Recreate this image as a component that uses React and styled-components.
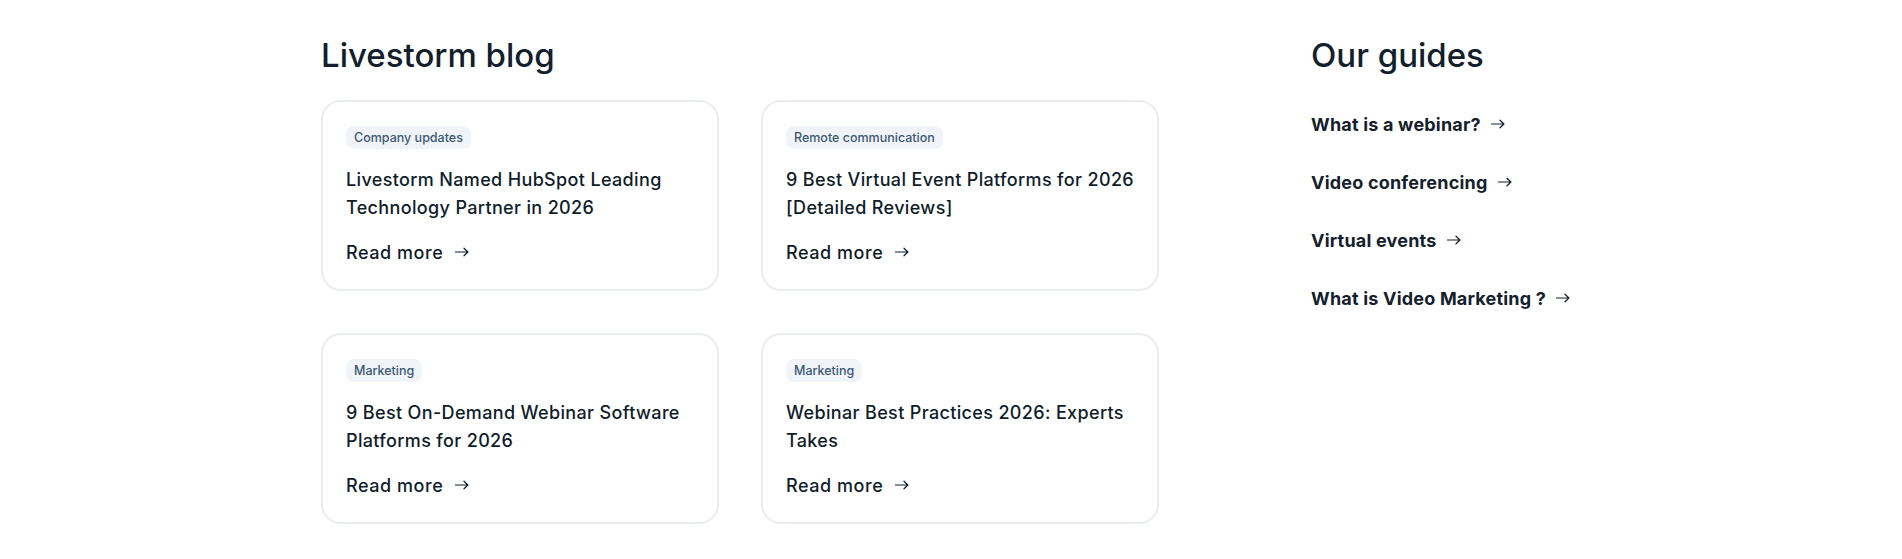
import React from "react";
import styled, { createGlobalStyle } from "styled-components";

const posts = [
  { tag: "Company updates", title: "Livestorm Named HubSpot Leading Technology Partner in 2026" },
  { tag: "Remote communication", title: "9 Best Virtual Event Platforms for 2026 [Detailed Reviews]" },
  { tag: "Marketing", title: "9 Best On-Demand Webinar Software Platforms for 2026" },
  { tag: "Marketing", title: "Webinar Best Practices 2026: Experts Takes" },
];

const guides = [
  "What is a webinar?",
  "Video conferencing",
  "Virtual events",
  "What is Video Marketing ?",
];

const Arrow = () => (
  <svg width="14" height="10" viewBox="0 0 14 10" fill="none">
    <path d="M0.5 5h12.5M9 1.2l3.9 3.8L9 8.8" stroke="currentColor" strokeWidth="1.2" strokeLinecap="round" strokeLinejoin="round" />
  </svg>
);

const App = () => {
  return (
    <>
      <GlobalStyle />
      <Page>
        <BlogColumn>
          <Heading>Livestorm blog</Heading>
          <CardGrid>
            {posts.map((post, i) => (
              <Card key={i}>
                <Tag>{post.tag}</Tag>
                <CardTitle>{post.title}</CardTitle>
                <ReadMore>
                  Read more
                  <Arrow />
                </ReadMore>
              </Card>
            ))}
          </CardGrid>
        </BlogColumn>
        <GuidesColumn>
          <Heading>Our guides</Heading>
          <GuideList>
            {guides.map((g) => (
              <GuideLink key={g}>
                {g}
                <Arrow />
              </GuideLink>
            ))}
          </GuideList>
        </GuidesColumn>
      </Page>
    </>
  );
};

const GlobalStyle = createGlobalStyle`
  body {
    margin: 0;
    background: #ffffff;
    font-family: "Inter", "Noto Sans", sans-serif;
    color: #0f1d2a;
  }
`;

const Page = styled.div`
  max-width: 1260px;
  margin: 0 auto;
  padding-top: 35px;
  display: flex;
  gap: 152px;
`;

const BlogColumn = styled.section`
  width: 838px;
  flex-shrink: 0;
`;

const GuidesColumn = styled.section`
  flex: 1;
`;

const Heading = styled.h2`
  margin: 0;
  font-size: 33px;
  line-height: 40px;
  font-weight: 500;
  color: #12202c;
`;

const CardGrid = styled.div`
  display: grid;
  grid-template-columns: 398px 398px;
  gap: 42px;
  margin-top: 25px;
`;

const Card = styled.article`
  border: 2px solid #e9edf1;
  border-radius: 20px;
  padding: 24px 23px 22px;
  display: flex;
  flex-direction: column;
  align-items: flex-start;
`;

const Tag = styled.span`
  display: inline-block;
  height: 23px;
  line-height: 23px;
  padding: 0 8px;
  border-radius: 8px;
  background: #f0f4f8;
  color: #3d5873;
  font-size: 12.5px;
  font-weight: 500;
`;

const CardTitle = styled.h3`
  margin: 17px 0 0;
  font-size: 18px;
  line-height: 28px;
  font-weight: 500;
  letter-spacing: 0.35px;
  min-height: 56px;
`;

const ReadMore = styled.a`
  margin-top: 17px;
  display: inline-flex;
  align-items: center;
  gap: 12px;
  font-size: 18px;
  line-height: 28px;
  font-weight: 500;
  letter-spacing: 0.55px;
  color: inherit;
  cursor: pointer;

  svg {
    margin-top: -2px;
  }
`;

const GuideList = styled.nav`
  margin-top: 37px;
  display: flex;
  flex-direction: column;
  gap: 32px;
`;

const GuideLink = styled.a`
  display: inline-flex;
  align-items: center;
  gap: 10px;
  font-size: 18px;
  line-height: 26px;
  font-weight: 700;
  letter-spacing: 0.2px;
  color: #14212c;
  cursor: pointer;

  svg {
    margin-top: -2px;
  }
`;

export default App;
